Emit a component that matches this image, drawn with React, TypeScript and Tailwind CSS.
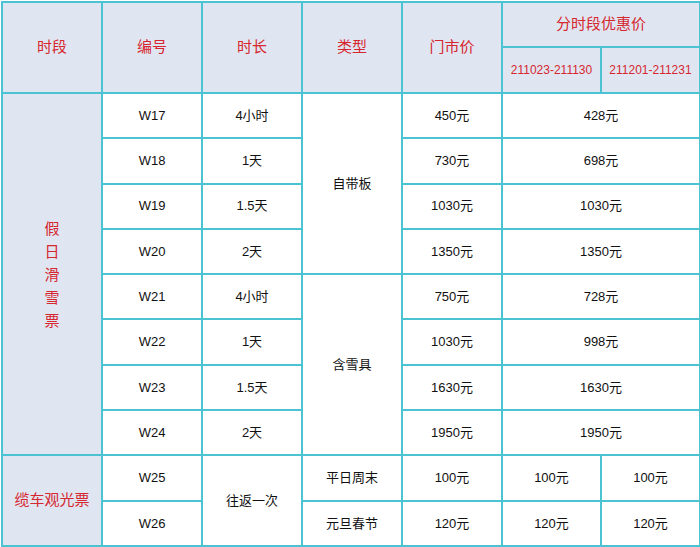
import React from "react";

const B = "border-2 border-[#4cc3d2]";
const H = `${B} bg-[#dfe6f2] text-[#d6262f] text-center align-middle`;
const C = `${B} bg-white text-[#111] text-center align-middle`;

const rows: [string, string, string, string][] = [
  ["W17", "4小时", "450元", "428元"],
  ["W18", "1天", "730元", "698元"],
  ["W19", "1.5天", "1030元", "1030元"],
  ["W20", "2天", "1350元", "1350元"],
  ["W21", "4小时", "750元", "728元"],
  ["W22", "1天", "1030元", "998元"],
  ["W23", "1.5天", "1630元", "1630元"],
  ["W24", "2天", "1950元", "1950元"],
];

export default function App() {
  return (
    <div
      className="w-[700px] h-[547px] bg-white overflow-hidden pt-[1px] pl-[1px]"
      style={{ fontFamily: '"Liberation Sans", "Noto Sans CJK SC", sans-serif' }}
    >
      <table className="w-[698px] h-[545px] table-fixed border-collapse text-[13px]">
        <colgroup>
          <col className="w-[100px]" />
          <col className="w-[100px]" />
          <col className="w-[100px]" />
          <col className="w-[100px]" />
          <col className="w-[100px]" />
          <col className="w-[99px]" />
          <col className="w-[99px]" />
        </colgroup>
        <tbody>
          <tr className="h-[45px]">
            <td rowSpan={2} className={`${H} text-[15px]`}>时段</td>
            <td rowSpan={2} className={`${H} text-[15px]`}>编号</td>
            <td rowSpan={2} className={`${H} text-[15px]`}>时长</td>
            <td rowSpan={2} className={`${H} text-[15px]`}>类型</td>
            <td rowSpan={2} className={`${H} text-[15px]`}>门市价</td>
            <td colSpan={2} className={`${H} text-[15px]`}>分时段优惠价</td>
          </tr>
          <tr className="h-[46px]">
            <td className={`${H} text-[12px]`}>211023-211130</td>
            <td className={`${H} text-[12px]`}>211201-211231</td>
          </tr>
          {rows.map((r, i) => (
            <tr key={r[0]} className="h-[45.3px]">
              {i === 0 && (
                <td rowSpan={8} className={`${H} text-[15px] leading-[23px]`}>
                  <div className="flex flex-col items-center">
                    <span>假</span>
                    <span>日</span>
                    <span>滑</span>
                    <span>雪</span>
                    <span>票</span>
                  </div>
                </td>
              )}
              <td className={C}>{r[0]}</td>
              <td className={C}>{r[1]}</td>
              {i === 0 && <td rowSpan={4} className={C}>自带板</td>}
              {i === 4 && <td rowSpan={4} className={C}>含雪具</td>}
              <td className={C}>{r[2]}</td>
              <td colSpan={2} className={C}>{r[3]}</td>
            </tr>
          ))}
          <tr className="h-[45.3px]">
            <td rowSpan={2} className={`${H} text-[15px]`}>缆车观光票</td>
            <td className={C}>W25</td>
            <td rowSpan={2} className={C}>往返一次</td>
            <td className={C}>平日周末</td>
            <td className={C}>100元</td>
            <td className={C}>100元</td>
            <td className={C}>100元</td>
          </tr>
          <tr className="h-[45.3px]">
            <td className={C}>W26</td>
            <td className={C}>元旦春节</td>
            <td className={C}>120元</td>
            <td className={C}>120元</td>
            <td className={C}>120元</td>
          </tr>
        </tbody>
      </table>
    </div>
  );
}
